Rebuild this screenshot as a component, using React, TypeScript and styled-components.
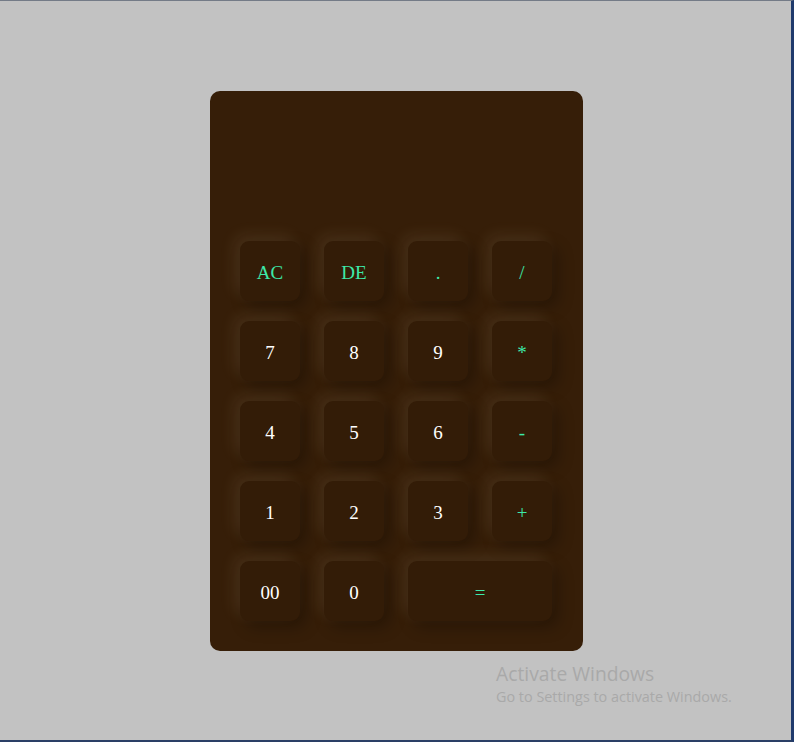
import React from "react";
import styled, { createGlobalStyle } from "styled-components";

const Global = createGlobalStyle`
  html, body { margin: 0; padding: 0; }
  body {
    background: #c2c2c2;
    width: 794px;
    height: 742px;
    overflow: hidden;
  }
`;

const Frame = styled.div`
  position: relative;
  box-sizing: border-box;
  width: 794px;
  height: 742px;
  border-top: 1px solid #747b87;
  border-right: 3px solid #1f3a6c;
  border-bottom: 2px solid #2a3f66;
  display: flex;
  justify-content: center;
  align-items: flex-start;
  padding-top: 90px;
  padding-left: 2px;
`;

const Calculator = styled.div`
  box-sizing: border-box;
  width: 373px;
  height: 560px;
  background: #361e08;
  border-radius: 10px;
  padding: 0 31px 30px 30px;
  display: flex;
  flex-direction: column;
`;

const Display = styled.div`
  height: 150px;
  flex: none;
`;

const Keys = styled.div`
  display: grid;
  grid-template-columns: repeat(4, 60px);
  grid-auto-rows: 60px;
  column-gap: 24px;
  row-gap: 20px;
`;

const Key = styled.button<{ $op?: boolean; $wide?: boolean }>`
  grid-column: ${(p) => (p.$wide ? "span 2" : "span 1")};
  border: none;
  border-radius: 9px;
  background: #331c07;
  color: ${(p) => (p.$op ? "#3de9a9" : "#ffffff")};
  font-family: "Liberation Serif", "DejaVu Serif", serif;
  font-size: 19px;
  padding: 4px 0 0 0;
  box-shadow: -6px -6px 16px rgba(255, 230, 200, 0.09),
    6px 6px 16px rgba(0, 0, 0, 0.28);
  display: flex;
  align-items: center;
  justify-content: center;
`;

const Watermark = styled.div`
  position: absolute;
  left: 496px;
  top: 661px;
  font-family: "Open Sans", "Noto Sans", sans-serif;
  color: #a9a9a9;
  line-height: 1.2;
`;

const WmTitle = styled.div`
  font-size: 19.3px;
`;

const WmSub = styled.div`
  font-size: 14.4px;
  margin-top: 3px;
`;

const keys: { label: string; op?: boolean; wide?: boolean }[] = [
  { label: "AC", op: true },
  { label: "DE", op: true },
  { label: ".", op: true },
  { label: "/", op: true },
  { label: "7" },
  { label: "8" },
  { label: "9" },
  { label: "*", op: true },
  { label: "4" },
  { label: "5" },
  { label: "6" },
  { label: "-", op: true },
  { label: "1" },
  { label: "2" },
  { label: "3" },
  { label: "+", op: true },
  { label: "00" },
  { label: "0" },
  { label: "=", op: true, wide: true },
];

export default function App() {
  return (
    <>
      <Global />
      <Frame>
        <Calculator>
          <Display />
          <Keys>
            {keys.map((k) => (
              <Key key={k.label} $op={k.op} $wide={k.wide}>
                {k.label}
              </Key>
            ))}
          </Keys>
        </Calculator>
        <Watermark>
          <WmTitle>Activate Windows</WmTitle>
          <WmSub>Go to Settings to activate Windows.</WmSub>
        </Watermark>
      </Frame>
    </>
  );
}
